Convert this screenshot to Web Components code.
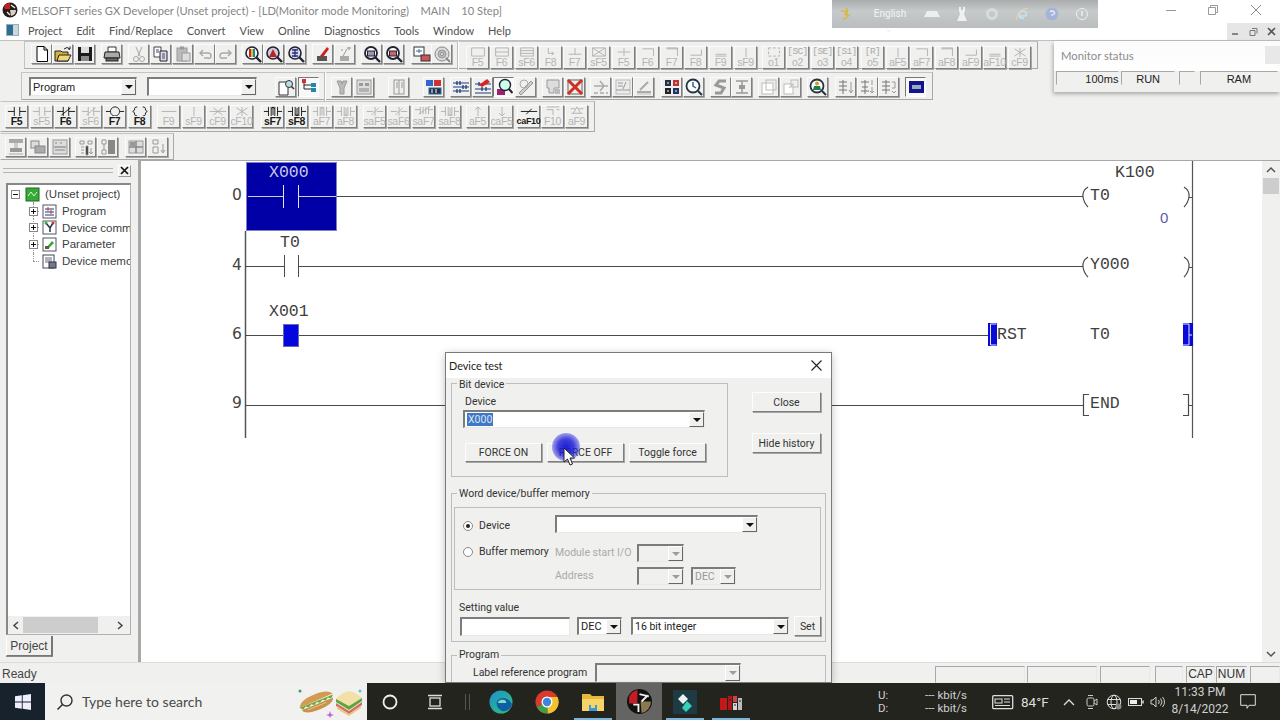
<!DOCTYPE html>
<html lang="en"><head><meta charset="utf-8"><title>GX Developer</title>
<style>
html,body{margin:0;height:720px;overflow:hidden;background:#f0f0ee}
body{font-family:"Roboto","Liberation Sans",sans-serif;--mono:"Liberation Mono",monospace;--seg:"Lato","Roboto",sans-serif}
</style></head><body>
<gx-app></gx-app>
<script>
function def(name,render){customElements.define(name,class extends HTMLElement{connectedCallback(){if(this.shadowRoot)return;this.attachShadow({mode:'open'}).innerHTML=render(this)}})}
const S=(w,h,vb,inner,st='')=>`<svg width="${w}" height="${h}" viewBox="${vb}" style="display:block;${st}" aria-hidden="true">${inner}</svg>`;
const G='#a8a8a8';
const ICON={
new:`<path d="M4 1.500h7l3.500 3.500v11.500H4z" fill="#fff" stroke="#000"/><path d="M11 1.500V5h3.500" fill="none" stroke="#000"/>`,
open:`<path d="M1 6h6l1 1h6v9H1z" fill="#d9b23c" stroke="#222"/><path d="M3 16l2-6h12l-3 6z" fill="#f0d878" stroke="#222"/><path d="M10 4q3-3 6 0l-1.500.5M16 4v-2.500" fill="none" stroke="#222"/>`,
save:`<rect x="2" y="2" width="14" height="14" fill="#1b1b1b"/><rect x="5" y="2" width="8" height="6" fill="#ddd"/><rect x="5" y="11" width="8" height="5" fill="#8a8a8a"/>`,
print:`<path d="M5 2h8v5H5z" fill="#fff" stroke="#333"/><path d="M2 7h14l1 6H1z" fill="#aaa" stroke="#222"/><rect x="3" y="13" width="12" height="3" fill="#666" stroke="#222"/>`,
cut:`<path d="M6 2l4 9M12 2L8 11" stroke="${G}" fill="none"/><circle cx="6" cy="14" r="2.500" fill="none" stroke="${G}"/><circle cx="12" cy="14" r="2.500" fill="none" stroke="${G}"/>`,
copy:`<path d="M2 2h7v10H2z" fill="#fff" stroke="#444"/><path d="M8 6h7v10H8z" fill="#dde" stroke="#222"/><path d="M4 5h3M4 7h3M10 9h3M10 11h3M10 13h3" stroke="#446"/>`,
paste:`<rect x="3" y="3" width="10" height="13" fill="#bbb" stroke="#999"/><rect x="8" y="8" width="8" height="8" fill="#ddd" stroke="#999"/><rect x="6" y="1.500" width="4" height="3" fill="#999"/>`,
undo:`<path d="M4 8h8q3 0 3 3t-3 2H8M7 5L4 8l3 3" fill="none" stroke="${G}" stroke-width="1.400"/>`,
redo:`<path d="M14 8H6q-3 0-3 3t3 2h4M11 5l3 3-3 3" fill="none" stroke="${G}" stroke-width="1.400"/>`,
m1:`<circle cx="8" cy="8" r="6" fill="#fff" stroke="#223" stroke-width="1.600"/><path d="M5 4h2v8H5z" fill="#c22"/><path d="M7 4h2v8H7z" fill="#e0c020"/><path d="M9 4h2v8H9z" fill="#18a"/><path d="M12.500 12.500L17 17" stroke="#223" stroke-width="2.400"/>`,
m2:`<circle cx="8" cy="8" r="6" fill="#ccd" stroke="#223" stroke-width="1.600"/><path d="M4 12l4-8 4 8z" fill="#b22"/><path d="M12.500 12.500L17 17" stroke="#223" stroke-width="2.400"/>`,
m3:`<circle cx="8" cy="8" r="6" fill="#dde" stroke="#223" stroke-width="1.600"/><path d="M5 5h6M5 8h6M5 11h6M8 4v8" stroke="#237" stroke-width="1.300"/><path d="M12.500 12.500L17 17" stroke="#223" stroke-width="2.400"/>`,
pen:`<rect x="3" y="11" width="10" height="5" fill="#555"/><path d="M6 11l7-9 2 2-6 8z" fill="#c22"/>`,
wand:`<rect x="4" y="11" width="9" height="5" fill="#aaa"/><path d="M7 11l4-7M13 2v3M11 3h4M5 5h2" stroke="#999"/>`,
z1:`<circle cx="8" cy="8" r="6" fill="#fff" stroke="#223" stroke-width="1.800"/><rect x="4.500" y="6" width="7" height="5" fill="#99a" stroke="#223"/><path d="M12.500 12.500L17 17" stroke="#223" stroke-width="2.400"/>`,
z2:`<circle cx="8" cy="8" r="6" fill="#fff" stroke="#223" stroke-width="1.800"/><rect x="4.500" y="6" width="7" height="5" fill="#c66" stroke="#223"/><path d="M12.500 12.500L17 17" stroke="#223" stroke-width="2.400"/>`,
win:`<rect x="1" y="2" width="10" height="9" fill="#fff" stroke="#333"/><path d="M3 6h6M6 4v4" stroke="#36a"/><rect x="8" y="10" width="9" height="6" fill="#c55" stroke="#333"/>`,
disk:`<circle cx="9" cy="9" r="7" fill="#ddd" stroke="#888"/><circle cx="9" cy="9" r="4" fill="#bbb" stroke="#999"/><circle cx="9" cy="9" r="1.500" fill="#fff" stroke="#888"/><path d="M13 13l4 4" stroke="#888" stroke-width="2"/>`,
docmag:`<path d="M2 4h9v13H2z" fill="#fff" stroke="#333"/><circle cx="12" cy="6" r="3.500" fill="#bde" stroke="#333"/><path d="M14.500 8.500L17 11" stroke="#333" stroke-width="1.600"/>`,
treeb:`<path d="M4 3v8h8M4 7h8" fill="none" stroke="#222"/><rect x="2" y="1" width="4" height="4" fill="#c33"/><rect x="11" y="5" width="5" height="4" fill="#28a"/><rect x="11" y="10" width="5" height="4" fill="#28a"/>`,
dev:`<path d="M4 3h4l1 3 1-3h4l-3 7v6H7v-6z" fill="#bbb" stroke="#999"/>`,
dev2:`<rect x="2" y="2" width="14" height="14" fill="#ddd" stroke="#999"/><path d="M4 5h4v3H4zM10 5h4v3h-4z" fill="#999"/><path d="M4 11h10M4 13h10" stroke="#888"/>`,
book:`<rect x="4" y="2" width="10" height="14" fill="#eee" stroke="#999"/><path d="M9 2v14M6 5h2M6 7h2M6 9h2M11 5h2M11 7h2M11 9h2" stroke="#999"/>`,
bl1:`<rect x="1" y="2" width="7" height="6" fill="#36c"/><rect x="9" y="2" width="7" height="6" fill="#c33"/><rect x="4" y="10" width="12" height="6" fill="#234" stroke="#36a"/><path d="M7 11v4M11 11v4" stroke="#fff"/>`,
lad1:`<path d="M1 5h16M1 9h16M1 13h16" stroke="#1c3c78"/><path d="M5 3v4M8 3v4M11 7v4M14 7v4M5 11v4M8 11v4" stroke="#1c3c78" stroke-width="1.300"/>`,
lad2:`<path d="M1 6h16M1 11h16M1 15h16" stroke="#1c3c78"/><path d="M5 4v4M8 9v4M12 9v4" stroke="#1c3c78" stroke-width="1.300"/><path d="M5 7L13 1l3 3-8 5z" fill="#d22"/>`,
moni:`<path d="M2 11h8v6H2z" fill="#a02070"/><circle cx="10" cy="7" r="5.500" fill="#cfe" stroke="#223" stroke-width="1.400"/><path d="M14 11l3.500 4" stroke="#223" stroke-width="2"/>`,
edit:`<path d="M2 15L14 3l2 2-12 12z" fill="#ccc" stroke="#999"/><circle cx="7" cy="6" r="4" fill="none" stroke="#aaa"/>`,
cmt:`<path d="M3 2h12v8H10v5H5v-5H3z" fill="#ddd" stroke="#999"/><rect x="11" y="11" width="5" height="5" fill="#bbb"/>`,
xred:`<rect x="2" y="2" width="14" height="14" fill="#eee" stroke="#666"/><path d="M2 2l14 14M16 2L2 16" stroke="#d03020" stroke-width="3"/>`,
lg1:`<path d="M2 8h14M8 3l4 5-4 5M2 15h4M8 15h4M14 15h2" stroke="#aaa" fill="none" stroke-width="1.500"/>`,
lg2:`<rect x="2" y="2" width="14" height="14" fill="#ececec" stroke="#bbb"/><path d="M4 5h5M4 8h5M2 12h14M12 4l-3 7" stroke="#999"/>`,
lg3:`<path d="M2 14h14M5 12l8-8" stroke="#aaa" stroke-width="2"/><path d="M2 16h14" stroke="#bbb"/>`,
grid:`<rect x="2" y="2" width="6" height="6" fill="#234"/><rect x="10" y="2" width="6" height="6" fill="#b33"/><rect x="2" y="10" width="6" height="6" fill="#222"/><rect x="10" y="10" width="6" height="6" fill="#236"/><path d="M5 4v2M13 4v2M4 13h2M12 13h2" stroke="#fff"/>`,
scan:`<circle cx="8" cy="8" r="6.500" fill="#fff" stroke="#234" stroke-width="1.800"/><path d="M8 4v4l3 2" stroke="#2a6a9a" stroke-width="1.500" fill="none"/><path d="M13 13l4 4" stroke="#234" stroke-width="2"/>`,
ss:`<path d="M14 3H7L4 7l8 3-3 5H3" fill="none" stroke="#999" stroke-width="3"/>`,
ii:`<path d="M3 3h12M3 15h12M9 3v12" stroke="#999" stroke-width="1.500"/><rect x="6" y="7" width="6" height="4" fill="#999"/>`,
sq1:`<rect x="2" y="5" width="11" height="11" fill="#fff" stroke="#bbb"/><rect x="6" y="2" width="10" height="10" fill="none" stroke="#bbb"/>`,
sq2:`<rect x="2" y="6" width="9" height="10" fill="#fff" stroke="#bbb"/><rect x="9" y="2" width="7" height="7" fill="none" stroke="#bbb"/><path d="M7 10l4-4" stroke="#bbb"/>`,
who:`<circle cx="8" cy="8" r="6.500" fill="#fff" stroke="#234" stroke-width="1.800"/><circle cx="8" cy="5.500" r="2" fill="#c9a020"/><path d="M4 12l1-4h6l1 4z" fill="#2a7a50"/><path d="M13 13l4 4" stroke="#234" stroke-width="2"/>`,
tr1:`<path d="M6 2v14M2 4h8M2 8h8M2 12h8" stroke="#777"/><path d="M14 4v10M12 12l2 3 2-3" fill="none" stroke="#999"/>`,
tr2:`<path d="M6 2v14M2 4h8M3 9h6M2 13h8" stroke="#777"/><path d="M13 2v5M13 9v6M11 13l2 2 2-2" fill="none" stroke="#999"/>`,
tr3:`<path d="M6 2v14M2 4h8M2 8h8M2 12h8" stroke="#777"/><path d="M12 4h3v6h-3M12 13l2 2 2-2" fill="none" stroke="#999"/>`,
blue:`<rect x="2" y="3" width="15" height="12" fill="#14148c"/><rect x="5" y="7" width="9" height="4" fill="#9ab"/>`,
r1:`<rect x="2" y="1" width="14" height="4" fill="#aaa"/><rect x="7" y="5" width="4" height="5" fill="#ccc"/><rect x="3" y="10" width="12" height="4" fill="#999"/><path d="M2 16h14" stroke="#aaa"/>`,
r2:`<rect x="2" y="3" width="8" height="7" fill="#ddd" stroke="#888"/><rect x="6" y="8" width="10" height="7" fill="#aaa" stroke="#888"/>`,
r3:`<rect x="2" y="2" width="14" height="14" fill="#ddd" stroke="#999"/><path d="M3 9h12" stroke="#777"/><path d="M4 5h2M9 5h2M4 12h10" stroke="#888"/>`,
r4:`<path d="M3 3h4v3H3zM11 3h4v3h-4z" fill="none" stroke="#999"/><path d="M4 9h3M4 12h3M4 15h3M9 8h2v9H9z" stroke="#999"/><path d="M14 10v6M12 14l2 2 2-2" fill="none" stroke="#999"/>`,
r5:`<path d="M3 2h4v4H3zM3 12h4v4H3zM5 6v6" fill="none" stroke="#999"/><rect x="9" y="2" width="7" height="14" fill="#888"/>`,
r6:`<rect x="2" y="3" width="14" height="12" fill="#ddd" stroke="#999"/><path d="M9 3v12M2 9h14" stroke="#888" stroke-width="1.500"/><rect x="3" y="4" width="5" height="4" fill="#999"/>`,
r7:`<path d="M4 2h5v4H4zM4 9h5v6H4z" fill="none" stroke="#999"/><path d="M14 6v8M12 12l2 3 2-3" fill="none" stroke="#999"/>`
};
const GL={
co:'M0 6h7M7 1v10M13 1v10M13 6h7',
nc:'M0 6h7M7 1v10M13 1v10M13 6h7M5 10L15 2',
cl:'M0 6h5M15 6h5M10 1a5 5 0 1 0 .01 0',
fn:'M7 1q-3 0-3 2v1.500L2 6l2 1.500V9q0 2 3 2M13 1q3 0 3 2v1.500L18 6l-2 1.500V9q0 2-3 2',
h:'M2 6h16',v:'M10 1v10',
xh:'M1 6h18M5 2l10 8M15 2L5 10',xv:'M10 1v10M4 2l12 8M16 2L4 10',
pu:'M0 6h5M5 1v10M8 1v10M12 1v10M15 1v10M15 6h5M10 1v9M8.500 3L10 1l1.500 2',
pd:'M0 6h5M5 1v10M8 1v10M12 1v10M15 1v10M15 6h5M10 2v9M8.500 9l1.500 2 1.500-2',
pun:'M0 4h6M6 1v8M9 1v8M12 1v8M15 1v8M15 4h5M4 9L17 0',
nh:'M1 6h7M12 6h7M10 1v10M6 10L14 2',
up:'M10 1v10M7 4l3-3 3 3',dn:'M10 1v10M7 8l3 3 3-3',
sl:'M1 6h18M7 9l6-6',
ww:'M3 1h14M3 4h7v6M17 4h-3',
wx:'M4 8h12M10 1l-4 7M10 1l4 7M3 3h5M12 3h5',
r1:'M3 1h14v9H3z',r2:'M3 1h14v9H3zM3 5.500h14',r3:'M3 1h14v9H3zM3 4h14M3 7h14',
ar:'M7 1v6h6M11 5l2 2-2 2',t:'M10 1v7M3 8h14',xb:'M3 1h14v9H3zM3 1l14 9M17 1L3 10',pl:'M10 1v9M3 5.500h14',
ct:'M4 2h12v8',ctb:'M4 2h12v8M4 1h12v2',cb:'M4 9h12V3',cbb:'M4 8h12M4 10h12',
ds:'M4 1h12v9H4z'
};
const I=(c,k,o={})=>({c,k,...o});
const K=(c,g,l,on)=>({c,g,l,on});
const ROWS={
1:{ml:24,w:1014,h:28,top:0,items:[
I(41,'new'),I(62,'open'),I(84,'save'),I(111,'print'),I(138,'cut'),I(160,'copy'),I(182,'paste'),I(204,'undo'),I(225,'redo'),I(252,'m1'),I(273,'m2'),I(295,'m3'),I(322,'pen'),I(344,'wand'),I(371,'z1'),I(393,'z2'),I(421,'win'),I(441,'disk'),{c:458,sep:1},
K(477,'r1','F5'),K(501,'r2','F6'),K(526,'r3','sF6'),K(550,'ar','F8'),K(574,'t','F7'),K(598,'xb','sF5'),K(623,'pl','F5'),K(647,'ct','F6'),K(671,'ctb','F7'),K(695,'cb','F8'),K(720,'cbb','F9'),K(745,'v','sF9'),
{c:773,g:'ds',l:'o1',dash:1},{c:797,tt:'[SC]',l:'o2'},{c:822,tt:'[SE]',l:'o3'},{c:846,tt:'[S1]',l:'o4'},{c:872,tt:'[R]',l:'o5'},K(897,'v','aF5'),K(921,'ct','aF7'),K(946,'ctb','aF8'),K(970,'cb','aF9'),K(994,'cbb','aF10'),K(1019,'xv','cF9')]},
2:{ml:21,w:912,h:28,top:3,pad:1,combo:1,items:[
{c:83,combo:'Program',w:108},{c:202,combo:'',w:110},
I(285,'docmag',{flat:1}),I(308,'treeb',{pressed:1}),{c:325,sep:1},I(341,'dev'),I(363,'dev2'),I(398,'book'),I(433,'bl1'),I(460,'lad1'),I(482,'lad2'),I(503,'moni',{pressed:1}),I(525,'edit'),I(552,'cmt'),I(574,'xred'),I(600,'lg1'),I(622,'lg2'),I(643,'lg3'),I(671,'grid'),I(693,'scan'),I(720,'ss'),I(741,'ii'),I(768,'sq1'),I(790,'sq2'),I(817,'who'),I(845,'tr1'),I(867,'tr2'),I(888,'tr3'),I(915,'blue',{pressed:1})]},
3:{ml:0,w:595,h:31,top:1,items:[
K(16,'co','F5',1),K(41,'co','sF5'),K(65,'nc','F6',1),K(90,'nc','sF6'),K(114,'cl','F7',1),K(139,'fn','F8',1),K(168,'h','F9'),K(193,'v','sF9'),K(217,'xh','cF9'),K(241,'xv','cF10'),K(272,'pu','sF7',1),K(296,'pd','sF8',1),K(321,'pu','aF7'),K(345,'pd','aF8'),K(374,'nh','saF5'),K(398,'nh','saF6'),K(423,'pun','saF7'),K(449,'pd','saF8'),K(477,'up','aF5'),K(501,'dn','caF5'),K(528,'sl','caF10',1),K(552,'ww','F10'),K(576,'wx','aF9')]},
4:{ml:0,w:174,h:27,top:1,items:[I(15,'r1'),I(37,'r2'),I(59,'r3'),I(85,'r4'),I(107,'r5'),I(135,'r6'),I(157,'r7')]}
};
const RAISED='border:1px solid;border-color:#fdfdfd #7e7e7e #7e7e7e #fdfdfd;box-shadow:1px 1px 0 #a6a6a6;';
def('win-btn',h=>`<style>:host{display:flex;align-items:center;justify-content:center;box-sizing:border-box;background:#f0f0ee;${RAISED}font-size:10.500px;color:#333;white-space:nowrap}</style><slot></slot>`);
def('win-combo',h=>{const off=h.hasAttribute('off');return `<style>:host{display:flex;box-sizing:border-box;align-items:stretch;background:${off?'#f0f0ee':'#fff'};border:1px solid;border-width:2px 1px 1px 2px;border-color:#7c7c7c #e8e8e8 #e8e8e8 #7c7c7c;color:#222;font-size:inherit}
.t{flex:1;padding-left:2px;display:flex;align-items:center;overflow:hidden;white-space:nowrap}
.b{width:15px;background:#f0f0ee;box-sizing:border-box;border:1px solid;border-color:#fff #666 #666 #fff;display:flex;align-items:center;justify-content:center}
.a{width:0;height:0;border:4px solid transparent;border-top:4px solid ${off?'#9c9c9c':'#111'};border-bottom:0}</style><div class="t"><slot></slot></div><div class="b"><div class="a"></div></div>`});
def('win-group',h=>`<style>:host{display:block;position:relative;box-sizing:border-box;border:1px solid #bdbdbd;font-size:10.500px;color:#333}
.l{position:absolute;left:5px;top:${h.getAttribute('lt')||-7}px;background:#f0f0ee;padding:0 2px;line-height:14px;white-space:nowrap}</style><span class="l">${h.getAttribute('legend')||''}</span><slot></slot>`);
def('tool-btn',h=>{
 const key=h.getAttribute('k'),g=h.getAttribute('g'),l=h.getAttribute('l'),on=h.hasAttribute('on'),tt=h.getAttribute('tt'),pr=h.hasAttribute('pressed'),dash=h.hasAttribute('dash');
 const col=on?'#111':'#b0b0b0';
 let inner='';
 if(key)inner=S(18,18,'0 0 18 18',ICON[key]);
 else{
  inner=tt?`<div class="tt">${tt}</div>`:S(20,11,'0 0 20 11',`<path d="${GL[g]}" fill="none" stroke="${col}" ${dash?'stroke-dasharray="3 2"':''}/>`);
  inner+=`<div class="lb">${l}</div>`;
 }
 return `<style>:host{display:flex;flex:none;flex-direction:column;align-items:center;justify-content:center;box-sizing:border-box;background:${pr?'#f8f8f8':'#f0f0ee'};border:1px solid;border-color:${pr?'#777 #fff #fff #777':'#fbfbfb #808080 #808080 #fbfbfb'};${pr?'':'box-shadow:1px 1px 0 #a8a8a8;'}overflow:visible}
 .lb{font:${on?'700':'400'} ${l&&l.length>4?9:10.5}px/11px "Liberation Sans",sans-serif;color:${on?'#1a1a1a':'#b4b4b4'};white-space:nowrap;letter-spacing:-.3px}
 .tt{font:9.500px/11px "Liberation Mono",monospace;color:#aaa;white-space:nowrap;letter-spacing:-.6px}</style>${inner}`});
def('tool-sep',h=>`<style>:host{display:block;flex:none;align-self:stretch;width:1px;background:#bcbcbc;border-right:1px solid #fff;margin-top:-2px;margin-bottom:-2px}</style>`);
def('gx-toolbar',h=>{
 const r=h.getAttribute('row'),d=ROWS[r];let x=d.ml+1,html='';
 for(const it of d.items){
  let w,hh;
  if(it.sep){w=2;hh=0}
  else if(it.combo!==undefined){w=it.w;hh=19}
  else if(it.g||it.tt){w=23;hh=23}
  else{w=21;hh=20}
  const left=Math.round(it.c-w/2),ml=left-x;x=left+w;
  let off='';
  if(r==='1'&&!it.sep)off=(it.g||it.tt)?'margin-top:4px;':'margin-bottom:2px;';
  const base=`margin-left:${ml}px;width:${w}px;${off}`;
  if(it.sep)html+=`<tool-sep style="margin-left:${ml}px"></tool-sep>`;
  else if(it.combo!==undefined)html+=`<win-combo style="${base}height:${hh}px;font:11px 'Liberation Sans',sans-serif">${it.combo}</win-combo>`;
  else{
   let at='';if(it.k)at+=` k="${it.k}"`;if(it.g)at+=` g="${it.g}"`;if(it.l)at+=` l="${it.l}"`;if(it.tt)at+=` tt="${it.tt}"`;if(it.on)at+=' on';if(it.pressed)at+=' pressed';if(it.dash)at+=' dash';
   html+=`<tool-btn${at} style="${base}height:${hh}px"></tool-btn>`;
  }
 }
 h.innerHTML=html;
 return `<style>:host{display:flex;align-items:center;box-sizing:border-box;height:${d.h}px;width:${d.w}px;margin-left:${d.ml}px;margin-top:${d.top}px;padding-top:${d.pad||0}px;border:1px solid;border-color:#c4c4c4 #a8a8a8 #a8a8a8 #c4c4c4;border-left-color:${d.ml?'#c4c4c4':'transparent'}}</style><slot></slot>`});
def('gx-title',h=>`<style>:host{display:flex;align-items:center;height:20px;background:#fff;color:#858585;font:11.150px var(--seg);flex:none}
.ic{margin:0 3px 0 2px}.t{white-space:pre}.w{margin-left:auto;display:flex;padding-right:3px}.w div{width:42.500px;display:flex;justify-content:center}</style>
<div class="ic">${S(16,16,'0 0 16 16',`<circle cx="8" cy="8" r="7.500" fill="#2a1a1a"/><path d="M2 5a7 7 0 0 1 6-4v6H3z" fill="#c42020"/><path d="M8 8h6a6 6 0 0 1-5 6z" fill="#d8d0c0"/><path d="M9 3l4 3M5 10l3 3" stroke="#eee" stroke-width="1.400"/>`)}</div>
<div class="t">MELSOFT series GX Developer (Unset project) - [LD(Monitor mode Monitoring)    MAIN    10 Step]</div>
<div class="w"><div>${S(12,12,'0 0 12 12','<path d="M1 6.500h10" stroke="#999"/>')}</div><div>${S(12,12,'0 0 12 12','<path d="M1.500 3.500h7v7h-7zM3.500 3.500v-2h7v7h-2" fill="none" stroke="#999"/>')}</div><div>${S(12,12,'0 0 12 12','<path d="M1 1l10 10M11 1L1 11" stroke="#888"/>')}</div></div>`);
def('gx-menu',h=>`<style>:host{display:flex;align-items:center;height:20px;background:#fff;color:#505050;font:11px var(--seg);flex:none;position:relative}
.ic{width:11px;height:10px;margin:0 2px 0 6px;background:linear-gradient(90deg,#2a6f8f 55%,#c8d8dc 55%);border:1px solid #9ab}
span{padding:0 7px;white-space:nowrap}.m{margin-left:auto;display:flex;align-self:flex-end;height:17px;background:#e6e6e6}.m div{width:17.700px;display:flex;align-items:center;justify-content:center}</style>
<div class="ic"></div><span>Project</span><span>Edit</span><span>Find/Replace</span><span>Convert</span><span>View</span><span>Online</span><span>Diagnostics</span><span>Tools</span><span>Window</span><span>Help</span>
<div class="m"><div>${S(9,9,'0 0 9 9','<path d="M1 7h6" stroke="#666" stroke-width="1.500"/>')}</div><div>${S(9,9,'0 0 9 9','<path d="M1 3.500h5v5H1zM3 1.500h5v5" fill="none" stroke="#777"/>')}</div><div>${S(9,9,'0 0 9 9','<path d="M1 1l7 7M8 1L1 8" stroke="#555" stroke-width="1.600"/>')}</div></div>`);
def('gx-toolbars',h=>`<style>:host{display:block;height:120px;background:#f0f0ee;flex:none;overflow:hidden;box-sizing:border-box;border-top:1px solid #c0c0c0}</style><slot></slot>`);
const TI={
root:`<rect x="1" y="1" width="13" height="13" fill="#38a838" stroke="#1c6c1c"/><path d="M3 9l3-4 3 4 3-4" stroke="#cfc" fill="none"/>`,
prog:`<rect x="1" y="1" width="13" height="13" fill="#fff" stroke="#556"/><path d="M3 5h9M3 8h9M3 11h9" stroke="#236"/><path d="M6 3v4M9 6v4" stroke="#c33"/>`,
dev:`<rect x="1" y="1" width="13" height="13" fill="#fff" stroke="#556"/><path d="M4 3l4 5 3-5M8 8v4" stroke="#234" stroke-width="1.500" fill="none"/><circle cx="4" cy="3" r="1.500" fill="#3a3"/><circle cx="11" cy="3" r="1.500" fill="#c33"/>`,
par:`<rect x="1" y="1" width="13" height="13" fill="#fff" stroke="#556"/><path d="M4 11l6-7 2 2-6 6z" fill="#38a838"/><rect x="3" y="9" width="4" height="3" fill="#654"/>`,
mem:`<rect x="1" y="1" width="11" height="13" fill="#fff" stroke="#445"/><path d="M3 4h7M3 6h7M3 8h7" stroke="#667"/><rect x="7" y="8" width="7" height="6" fill="#778" stroke="#334"/>`
};
def('tree-row',h=>{const lvl=+h.getAttribute('lvl'),ex=h.getAttribute('ex'),last=h.hasAttribute('last');
 const box=ex?`<div class="b">${ex==='-'?'<i></i>':'<i></i><u></u>'}</div>`:'<div class="b none"></div>';
 return `<style>:host{display:flex;align-items:center;height:16.700px;white-space:nowrap;color:#404040;font-size:inherit;padding-left:${lvl?21:3}px;position:relative}
 .b{width:9px;height:9px;border:1px solid #888;background:#fff;position:relative;z-index:1;margin-right:${lvl?4:5}px;flex:none;box-sizing:border-box}.b.none{border-color:transparent;background:none}
 i{position:absolute;left:1px;top:3px;width:5px;height:1px;background:#111}u{position:absolute;left:3px;top:1px;width:1px;height:5px;background:#111}
 .vl{position:absolute;left:25px;top:${lvl?0:8}px;bottom:${last?8:0}px;border-left:1px dotted #999}.hl{position:absolute;left:25px;top:8px;width:${lvl?6:0}px;border-top:1px dotted #999}
 .ic{margin-right:5px;flex:none;position:relative;z-index:1;background:#fff}</style><div class="vl"></div><div class="hl"></div>${box}<div class="ic">${S(15,15,'0 0 15 15',TI[h.getAttribute('ic')])}</div><slot></slot>`});
def('gx-dock',h=>`<style>:host{display:flex;flex-direction:column;box-sizing:border-box;width:141px;flex:none;background:#f0f0ee;border-right:3px solid #a8a8a8;padding:4px 0 0 6px;font:11.500px "Liberation Sans",sans-serif}
.hd{display:flex;align-items:center;height:13px;margin-left:-3px}
.gr{width:110px;height:3px;border-top:1px solid #b4b4b4;border-bottom:1px solid #b4b4b4;margin-right:5px}
.x{width:13px;height:12px;box-sizing:border-box;border:1px solid;border-color:#fff #999 #999 #fff;display:flex;align-items:center;justify-content:center}
.box{margin-top:6px;width:125px;height:452px;box-sizing:border-box;border:1px solid;border-width:2px 1px 1px 2px;border-color:#888 #b0b0b0 #b0b0b0 #888;background:#fff;display:flex;flex-direction:column;overflow:hidden}
.tr{flex:1;padding-top:1px;position:relative}
.sb{height:18px;background:#f0f0ee;display:flex;align-items:center;flex:none;color:#555}
.ar{width:15px;display:flex;justify-content:center;flex:none}.th{width:75px;height:16px;background:#cdcdcd}
.tab{align-self:flex-start;margin-top:1px;width:47px;height:20px;box-sizing:border-box;display:flex;align-items:center;justify-content:center;border:1px solid #777;border-top:0;border-left-color:#fff;border-right-width:2px;font-size:12px;color:#444;box-shadow:0 1px 0 #888}</style>
<div class="hd"><div class="gr"></div><div class="x">${S(9,9,'0 0 9 9','<path d="M1 1l7 7M8 1L1 8" stroke="#111" stroke-width="1.700"/>')}</div></div>
<div class="box"><div class="tr"><slot></slot></div><div class="sb"><div class="ar">${S(8,9,'0 0 8 9','<path d="M6 1L2 4.500 6 8" fill="none" stroke="#444" stroke-width="1.500"/>')}</div><div class="th"></div><div style="flex:1"></div><div class="ar" style="margin-right:3px">${S(8,9,'0 0 8 9','<path d="M2 1l4 3.500L2 8" fill="none" stroke="#444" stroke-width="1.500"/>')}</div></div></div>
<div class="tab">Project</div>`);
const OX=141,OY=161;
const T=(x,y,s,st='')=>`<span style="left:${x-OX}px;top:${y-OY-9}px;${st}">${s}</span>`;
const line=(a,b,c,d,col='#4a4a4a',w=1)=>`<path d="M${a} ${b}L${c} ${d}" stroke="${col}" stroke-width="${w}"/>`;
const coil=y=>`<path d="M1088 ${y-10}q-6 4-5 10t5 10M1184 ${y-10}q6 4 5 10t-5 10" fill="none" stroke="#4a4a4a" stroke-width="1.200"/>${line(1189,y+.5,1192,y+.5)}`;
const NUM='font:15.500px/20px \'DejaVu Sans\',sans-serif;color:#444';
def('gx-ladder',h=>{
 const B='#0a0ad8';
 const svg=`<svg class="c" width="1139" height="501" viewBox="${OX} ${OY} 1139 501" aria-hidden="true">
 ${line(245.500,231,245.500,438,'#555',1.500)}${line(1192.500,161,1192.500,438,'#555',1.200)}
 ${line(336,196.500,1083,196.500)}
 ${line(245,266.500,284,266.500)}${line(298,266.500,1083,266.500)}${line(284.500,255,284.500,277)}${line(298.500,255,298.500,277)}
 ${line(245,335.500,988,335.500)}${line(245,405.500,1083,405.500)}
 <rect x="246.500" y="162.500" width="90" height="68" fill="#0000a6" stroke="#7c80c8"/>
 ${line(248,196.500,283,196.500,'#ccd')}${line(298,196.500,336,196.500,'#ccd')}${line(283.500,185,283.500,208,'#e4e4f0')}${line(298.500,185,298.500,208,'#e4e4f0')}
 <rect x="283.500" y="324.500" width="15" height="22" fill="#0505e0" stroke="#6a6ab0"/>
 ${coil(197)}${coil(267)}
 <rect x="988" y="323" width="9" height="23" fill="${B}"/><path d="M990.500 324h6M990.500 345h6M990.500 324v21" fill="none" stroke="#e8e8ff"/>
 <rect x="1183" y="323" width="10" height="23" fill="${B}"/><path d="M1183 324h6v21h-6M1189 335h3" fill="none" stroke="#e8e8ff"/>
 <path d="M1089 394.500h-5.500v21h5.500M1183 394.500h5.500v21h-5.500M1189 405.500h3" fill="none" stroke="#4a4a4a" stroke-width="1.200"/>
 </svg>`;
 return `<style>:host{display:flex;flex:1;min-width:0;background:#fff;border-top:1px solid #a8a8a8}
 .cv{flex:1;position:relative;overflow:hidden;background:#fff}.c{position:absolute;left:0;top:0}
 span{position:absolute;font:16.500px/20px var(--mono);color:#3e3e3e;white-space:pre}
 .sb{width:18px;flex:none;background:#f0f0ee;display:flex;flex-direction:column;align-items:center}.sb .a{height:17px;display:flex;align-items:center;justify-content:center;flex:none}.th{width:16px;height:16px;background:#cdcdcd}</style>
 <div class="cv">${svg}
 ${T(232,194,'0',NUM)}${T(232,264,'4',NUM)}${T(232,333,'6',NUM)}${T(232,402,'9',NUM)}
 ${T(269,172,'X000','color:#c8cce4')}${T(280,242,'T0')}${T(269,311,'X001')}
 ${T(1115,172,'K100')}${T(1090,195,'T0')}${T(1160,217,'0','color:#5a5ab4;font-family:\'Liberation Sans\',sans-serif;font-size:15px')}
 ${T(1090,264,'Y000')}${T(997,334,'RST')}${T(1090,334,'T0')}${T(1090,403,'END')}
 </div>
 <div class="sb"><div class="a">${S(10,8,'0 0 10 8','<path d="M1 6l4-4 4 4" fill="none" stroke="#555" stroke-width="1.500"/>')}</div><div class="th"></div><div style="flex:1"></div><div class="a">${S(10,8,'0 0 10 8','<path d="M1 2l4 4 4-4" fill="none" stroke="#555" stroke-width="1.500"/>')}</div></div>`});
def('gx-work',h=>`<style>:host{display:flex;flex:1;min-height:0;background:#f0f0ee}</style><slot></slot>`);
def('gx-status',h=>`<style>:host{display:flex;align-items:flex-end;height:21px;flex:none;background:#f0f0ee;font:12px "Liberation Sans",sans-serif;color:#444;border-top:1px solid #dcdcdc;box-sizing:border-box}
.r{flex:1;padding:0 0 2px 2px}.c{height:17px;box-sizing:border-box;border:1px solid;border-color:#a8a8a8 #e8e8e8 #e8e8e8 #a8a8a8;text-align:center;line-height:15px;color:#333}</style>
<div class="r">Ready</div><div class="c" style="width:90px"></div><div class="c" style="width:70px;margin-left:2px"></div><div class="c" style="width:50px;margin-left:3px"></div><div class="c" style="width:28px;margin-left:5px"></div><div class="c" style="width:29px;margin-left:3px">CAP</div><div class="c" style="width:31px;margin-left:1px">NUM</div><div class="c" style="width:30px;margin-left:3px"></div>`);
const APP={
edge:`<defs><linearGradient id="eg" x1="0" y1="0" x2="1" y2="1"><stop offset="0" stop-color="#1a8fd8"/><stop offset="1" stop-color="#36c46c"/></linearGradient></defs><circle cx="12" cy="12" r="11.500" fill="url(#eg)"/><path d="M23 14C20 8 13 6 9 10c-3 3-1 9 4 11 5 1 9-2 10-7z" fill="#0d5fa8"/><path d="M12 10c3-1 6 1 5 3H9c0-1 1-3 3-3z" fill="#7fe0c0"/>`,
chrome:`<circle cx="12" cy="12" r="11.500" fill="#d83a2e"/><path d="M12 12L2 17A11.500 11.500 0 0 0 13 23.500z" fill="#3aa04a"/><path d="M12 12l1 11.500A11.500 11.500 0 0 0 22.500 7H12z" fill="#f2c22e"/><circle cx="12" cy="12" r="5.500" fill="#fff"/><circle cx="12" cy="12" r="4.200" fill="#3a86e0"/>`,
folder:`<path d="M1 4h8l2 2h12v15H1z" fill="#e8b83c"/><path d="M1 9h22v12H1z" fill="#f6d468"/><rect x="8" y="15" width="8" height="6" fill="#3a9ad8"/><rect x="10" y="15" width="4" height="3" fill="#f6d468"/>`,
gx:`<circle cx="12" cy="12" r="12" fill="#111"/><path d="M2 8a11 11 0 0 1 8-7v13H2z" fill="#c41c24"/><path d="M13 12h10a11 11 0 0 1-9 11z" fill="#8a7a50"/><path d="M12 5l9 2M14 12l6-6M6 15h5v7" stroke="#eee" stroke-width="1.800" fill="none"/>`,
film:`<rect width="24" height="24" fill="#1e3a42"/><path d="M10 3l5 5-5 5-5-5z" fill="#e8f4f0" transform="translate(0 1)"/><path d="M14 11l5 5-6 6-4-4z" fill="#35d0b8"/>`,
red:`<rect x="1" y="8" width="7" height="12" fill="#c41818"/><rect x="9" y="6" width="4" height="14" fill="#b01818"/><rect x="14" y="6" width="4" height="6" fill="#c44"/><rect x="14" y="13" width="4" height="7" fill="#d8d8d8"/><rect x="19" y="8" width="4" height="12" fill="#bbb"/><path d="M10 10h2M15 15h2M20 11h2" stroke="#222"/>`
};
def('task-app',h=>{const a=h.hasAttribute('active'),u=h.hasAttribute('open');const k=h.getAttribute('k');const z=+(h.getAttribute('z')||24);
 return `<style>:host{display:flex;position:relative;width:46px;align-items:center;justify-content:center;flex:none;background:${a?'#646462':'none'}}
 .u{position:absolute;left:${a?0:4}px;right:${a?0:4}px;bottom:0;height:2px;background:#7fb4da}</style>${S(z,z,'0 0 24 24',APP[k])}${u?'<div class="u"></div>':''}`});
def('win-taskbar',h=>`<style>:host{display:flex;height:37px;flex:none;background:#24241f;color:#d8d8d8;font:12px "Noto Sans",sans-serif;position:relative;z-index:5}
.st{width:45px;background:#17222c;display:flex;align-items:center;justify-content:center;flex:none}
.se{width:322px;background:#f1f1ef;display:flex;align-items:center;flex:none;color:#4a4a4a;font:14px/20px var(--seg);box-sizing:border-box}
.se .g{margin:0 8px 0 11px}.em{margin-left:auto;margin-right:3px}
.ce{width:45px;display:flex;align-items:center;justify-content:center;flex:none}
.div{width:21px;display:flex;justify-content:center;align-items:center;flex:none}.div i{width:3px;height:16px;border-left:1px solid #555;border-right:1px solid #555}
.apps{display:flex;flex:none}
.tray{margin-left:auto;width:410px;display:flex;align-items:center;flex:none;position:relative}
.tray>div{flex:none;display:flex;align-items:center;justify-content:center}
.v{flex-direction:column;align-items:flex-start!important;line-height:13px;font-size:11.500px;color:#d0d0d0;font-family:"Roboto",sans-serif}
</style>
<div class="st">${S(16,16,'0 0 16 16','<path d="M0 2.300l6.800-1v6.300H0zM7.700 1.200L16 0v7.600H7.700zM0 8.400h6.800v6.300l-6.800-1zM7.700 8.400H16V16l-8.300-1.200z" fill="#eef"/>')}</div>
<div class="se"><div class="g">${S(18,18,'0 0 18 18','<circle cx="10.500" cy="7.500" r="5.500" fill="none" stroke="#333" stroke-width="1.400"/><path d="M6.500 11.500L1.500 16.500" stroke="#333" stroke-width="1.600"/>')}</div>Type here to search
<div class="em">${S(66,32,'0 0 66 32',`<circle cx="2" cy="5" r="1.500" fill="#3a9a70"/><circle cx="62" cy="5" r="1.500" fill="#6ac0c8"/><path d="M32 25l1 3 3 1-3 1-1 2-1-2-3-1 3-1z" fill="#c060e0"/>
<g transform="rotate(-22 19 17)"><path d="M1 15Q4 8 19 8t18 6z" fill="#d29a52"/><path d="M1 15h36l-3 3-3-2-3 2-3-2-3 2-3-2-3 2-3-2-3 2-3-2-3 2z" fill="#6aa838"/><path d="M2 18q2 6 17 6t17-6z" fill="#c9924c"/><path d="M8 20h20" stroke="#e8c890"/></g>
<path d="M38 13Q42 8 50 5q8 1 14 7l-13 8z" fill="#f2e0a8"/><path d="M38 13l13 7 13-8v3l-13 9-13-8z" fill="#5da63a"/><path d="M38 17l13 8 13-9v3l-13 9-13-8z" fill="#d96a5e"/><path d="M39 20l12 8 12-8v2l-12 8-12-7z" fill="#e8c880"/>`)}</div></div>
<div class="ce">${S(18,18,'0 0 18 18','<circle cx="9" cy="9" r="6.500" fill="none" stroke="#eee" stroke-width="1.800"/>')}</div>
<div class="ce">${S(18,18,'0 0 18 18','<rect x="4" y="5" width="10" height="8" fill="none" stroke="#ddd" stroke-width="1.300"/><path d="M2 2.500h14M2 15.500h14" stroke="#ddd" stroke-width="1.300"/>')}</div>
<div class="div"><i></i></div>
<div class="apps"><task-app k="edge"></task-app><task-app k="chrome"></task-app><task-app k="folder" open></task-app><task-app k="gx" active z="25"></task-app><task-app k="film" open></task-app><task-app k="red" open></task-app></div>
<div class="tray">
<div class="v" style="width:47px;margin-left:8px"><span>U:</span><span>D:</span></div>
<div class="v" style="width:67px"><span>--- kbit/s</span><span>--- kbit/s</span></div>
<div style="width:29px;justify-content:flex-start">${S(22,16,'0 0 22 16','<rect x=".7" y="1.700" width="20" height="13" rx="1" fill="none" stroke="#ddd" stroke-width="1.300"/><rect x="3" y="5" width="7" height="4" fill="none" stroke="#ddd"/><path d="M12 5h6M12 8h6M3 11.500h15" stroke="#ddd"/>')}</div>
<div style="width:37px;font:13.500px Roboto,sans-serif;justify-content:flex-start;color:#ddd">84°F</div>
<div style="width:22px">${S(12,8,'0 0 12 8','<path d="M1 7l5-5 5 5" fill="none" stroke="#ddd" stroke-width="1.300"/>')}</div>
<div style="width:23px">${S(12,16,'0 0 12 16','<rect x="1" y="4" width="7" height="8" rx="1.500" fill="none" stroke="#ccc"/><path d="M8 7l3-2v6l-3-2M2 1.500h5M2 14.500h5" fill="none" stroke="#ccc"/>')}</div>
<div style="width:22px">${S(16,16,'0 0 16 16','<circle cx="8" cy="8" r="6.800" fill="none" stroke="#ddd"/><ellipse cx="8" cy="8" rx="3" ry="6.800" fill="none" stroke="#ddd"/><path d="M1.500 5.500h13M1.500 10.500h13" stroke="#ddd"/><circle cx="12.500" cy="12.500" r="3" fill="#888"/>')}</div>
<div style="width:22px">${S(16,10,'0 0 16 10','<rect x=".5" y="1.500" width="13" height="7" fill="none" stroke="#ddd"/><rect x="2" y="3" width="7" height="4" fill="#eee"/><path d="M15 3.500v3" stroke="#ddd" stroke-width="1.500"/>')}</div>
<div style="width:22px">${S(16,14,'0 0 16 14','<path d="M1 5h2l3-3v10L3 9H1z" fill="none" stroke="#ccc"/><path d="M8.500 5q1.500 2 0 4M10.500 3.500q3 3.500 0 7M12.500 2q4 5 0 10" fill="none" stroke="#ccc"/>')}</div>
<div class="v" style="width:62px;align-items:center!important;line-height:17px;font-size:12px;padding-bottom:2px"><span>11:33 PM</span><span>8/14/2022</span></div>
<div style="width:34px">${S(16,15,'0 0 16 15','<path d="M.7.700h14.600v10.600H9l-2 3v-3H.7z" fill="none" stroke="#ddd"/>')}</div>
</div>`);
def('lang-bar',h=>`<style>:host{position:absolute;left:832px;top:0;width:266px;height:28px;display:flex;align-items:center;background:linear-gradient(#a9adae,#c6cacb 40%,#b9bdbe);color:#f4f4f4;font-size:10px;z-index:6}
div{width:30px;display:flex;align-items:center;justify-content:center;flex:none}
.en{width:54px;padding-left:3px;padding-bottom:2px;position:relative;white-space:nowrap;box-sizing:content-box}
.en::after{content:"";position:absolute;left:26px;top:22px;border:3px solid transparent;border-top:3px solid #f4f4f4;border-bottom:0}</style>
<div style="width:28px">${S(16,14,'0 0 16 14','<path d="M3 4h6l-2 3 5 2M9 1v8q0 3-4 3" fill="none" stroke="#d8b848" stroke-width="1.600"/>')}</div><div class="en">English</div>
<div>${S(16,8,'0 0 16 8','<path d="M3 1h10l3 6H0z" fill="#eee"/>')}</div><div>${S(12,14,'0 0 12 14','<path d="M3 0h2v3h2V0h2v4l-1 3 3 7H1l3-7-1-3z" fill="#f0f0f0"/>')}</div><div>${S(14,14,'0 0 14 14','<circle cx="7" cy="7" r="4.500" fill="none" stroke="#d8dcdc" stroke-width="3"/>')}</div><div>${S(14,14,'0 0 14 14','<path d="M11 9H4q0-5 4-5t3 5M4 9q1 3 5 2" fill="none" stroke="#c4e4f4" stroke-width="1.500"/><path d="M1 13Q3 2 13 1" stroke="#e8d890" fill="none"/>')}</div><div>${S(14,14,'0 0 14 14','<circle cx="7" cy="7" r="6.500" fill="#a4b4d8"/><path d="M5 5q2-2 4 0t-2 3v1" fill="none" stroke="#eef" stroke-width="1.200"/>')}</div><div>${S(14,14,'0 0 14 14','<circle cx="7" cy="7" r="5.500" fill="none" stroke="#eee"/><path d="M7 4v5" stroke="#eee" stroke-width="1.500"/>')}</div>`);
def('monitor-status',h=>`<style>:host{position:absolute;left:1054px;top:41px;width:226px;height:51px;background:#fff;box-shadow:-1px 2px 4px rgba(0,0,0,.3);display:flex;flex-direction:column;z-index:4;font-family:"Liberation Sans",sans-serif;color:#222}
.t{height:30px;box-sizing:border-box;padding:0 0 2px 7px;display:flex;align-items:center;color:#8c8c8c;font:11.300px var(--seg);flex:none;background:linear-gradient(#fbfbfb,#fff)}
.x{margin-left:auto;width:15px;height:18px;background:#e8e8e8}
.c{display:flex;background:#f0f0ee;height:16px;padding:0 0 0 2px;font-size:11px;line-height:14px;flex:none}
.c div{box-sizing:border-box;border:1px solid;border-color:#a8a8a8 transparent transparent #a8a8a8;text-align:center;height:14px;margin-right:2px}</style>
<div class="t">Monitor status<div class="x"></div></div>
<div class="c"><div style="width:64px;text-align:right">100ms</div><div style="width:54px">RUN</div><div style="width:16px;margin-left:2px;margin-right:5px"></div><div style="width:79px">RAM</div></div>
<div style="flex:1;background:#f0f0ee"></div>`);
def('device-dialog',h=>`<style>:host{position:absolute;left:445px;top:352px;width:387px;height:331px;box-sizing:border-box;border:1px solid #7a7a7a;background:#f0f0ee;box-shadow:0 2px 8px rgba(0,0,0,.25);z-index:3;overflow:visible;color:#333;font:10.500px "Roboto","Liberation Sans",sans-serif}
 .wrap{height:329px;overflow:hidden}
 .tb{height:25px;background:#fff;display:flex;align-items:center;padding-left:3px;font:10.800px var(--seg);color:#222;box-sizing:border-box}
 .tb .cl{margin-left:auto;margin-right:9px}
 .body{padding:5px 0 0 5px}
 .top{display:flex}
 .rc{margin-left:24px;display:flex;flex-direction:column;padding-top:9px}
 .rc win-btn{width:69px;height:20px}.rc win-btn+win-btn{margin-top:21px}
 .lbl{line-height:14px;white-space:nowrap}
 .frow{display:flex;gap:5px;margin-top:15px;margin-left:13px}.frow win-btn{width:77px;height:19px}
 .in{display:grid;grid-template-columns:92px 82px 47px 7px 45px 22px;grid-template-rows:18px 29px 23px;align-items:end;margin:0 0 0 2px;padding:7px 0 0 8px;width:367px;height:83px;box-sizing:border-box;border:1px solid #bdbdbd}
 .rad{display:flex;align-items:center;gap:6px;white-space:nowrap}
 .r1{margin-bottom:1px}.r2{margin-bottom:4px}.g2{margin-bottom:3px}
 .dot{width:10px;height:10px;border-radius:50%;box-sizing:border-box;border:1px solid #888;background:#fff;position:relative;flex:none}
 .dot.on::after{content:"";position:absolute;left:2px;top:2px;width:4px;height:4px;border-radius:50%;background:#222}
 .gr{color:#aaa}
 .set{display:flex;align-items:flex-start;margin:1px 0 0 8px;height:20px}
 .ip{width:110px;height:19px;margin-top:1px;background:#fff;box-sizing:border-box;border:1px solid;border-width:2px 1px 1px 2px;border-color:#7c7c7c #e8e8e8 #e8e8e8 #7c7c7c}
 .sel{background:#3f78c4;color:#d8e4f4;padding:0 1px;font-size:10.500px;line-height:13px}
 .halo{position:absolute;left:106px;top:80px;width:28px;height:28px;background:radial-gradient(circle,rgba(20,20,208,.95) 0,rgba(32,32,216,.85) 40%,rgba(60,60,230,.45) 70%,rgba(80,80,240,0) 100%);pointer-events:none;border-radius:50%}
 .cur{position:absolute;left:117px;top:94px;pointer-events:none}
 </style>
 <div class="wrap"><div class="tb">Device test<div class="cl">${S(11,11,'0 0 11 11','<path d="M.5.500l10 10M10.500.500l-10 10" stroke="#222" stroke-width="1.100"/>')}</div></div>
 <div class="body">
  <div class="top">
   <win-group legend="Bit device" lt="-6" style="width:277px;height:94px">
    <div class="lbl" style="margin:11px 0 0 13px">Device</div>
    <win-combo style="width:242px;height:18px;margin:1px 0 0 11px"><span class="sel">X000</span></win-combo>
    <div class="frow"><win-btn>FORCE ON</win-btn><win-btn>FORCE OFF</win-btn><win-btn>Toggle force</win-btn></div>
   </win-group>
   <div class="rc"><win-btn>Close</win-btn><win-btn>Hide history</win-btn></div>
  </div>
  <win-group legend="Word device/buffer memory" style="width:375px;height:149px;margin-top:16px">
   <div style="height:13px"></div>
   <div class="in">
    <div class="rad r1"><div class="dot on"></div>Device</div>
    <win-combo style="grid-column:2/-1;width:203px;height:18px"></win-combo>
    <div class="rad r2"><div class="dot"></div>Buffer memory</div>
    <div class="gr g2">Module start I/O</div>
    <win-combo off style="height:18px"></win-combo><div></div><div></div><div></div>
    <div></div><div class="gr g2">Address</div>
    <win-combo off style="height:18px"></win-combo><div></div>
    <win-combo off style="height:18px;color:#999">DEC</win-combo><div></div>
   </div>
   <div class="lbl" style="margin:11px 0 0 7px">Setting value</div>
   <div class="set">
    <div class="ip"></div>
    <win-combo style="width:45px;height:18px;margin:1px 0 0 7px;font-size:11px">DEC</win-combo>
    <win-combo style="width:158px;height:18px;margin:1px 0 0 9px">16 bit integer</win-combo>
    <win-btn style="width:27px;height:20px;margin-left:5px">Set</win-btn>
   </div>
  </win-group>
  <win-group legend="Program" lt="-8" style="width:375px;height:60px;margin-top:13px">
   <div style="display:flex;align-items:center;margin:7px 0 0 21px"><div class="lbl" style="width:122px">Label reference program</div><win-combo off style="width:146px;height:19px"></win-combo></div>
  </win-group>
 </div></div>
 <div class="halo"></div>
 <div class="cur">${S(13,19,'0 0 13 19','<path d="M1 1v14l3.500-3 2.500 6 2.500-1-2.500-6h4.500z" fill="#fff" stroke="#222" stroke-width="1"/>')}</div>`);
def('gx-app',h=>`<style>:host{display:flex;flex-direction:column;position:relative;width:1280px;height:720px;overflow:hidden}</style>
 <gx-title></gx-title><gx-menu></gx-menu>
 <gx-toolbars><gx-toolbar row="1"></gx-toolbar><gx-toolbar row="2"></gx-toolbar><gx-toolbar row="3"></gx-toolbar><gx-toolbar row="4"></gx-toolbar></gx-toolbars>
 <gx-work><gx-dock><tree-row lvl="0" ex="-" ic="root">(Unset project)</tree-row><tree-row lvl="1" ex="+" ic="prog">Program</tree-row><tree-row lvl="1" ex="+" ic="dev">Device comment</tree-row><tree-row lvl="1" ex="+" ic="par">Parameter</tree-row><tree-row lvl="1" last ic="mem">Device memory</tree-row></gx-dock><gx-ladder></gx-ladder></gx-work>
 <gx-status></gx-status><win-taskbar></win-taskbar>
 <lang-bar></lang-bar><monitor-status></monitor-status><device-dialog></device-dialog>`);
</script>
</body></html>
